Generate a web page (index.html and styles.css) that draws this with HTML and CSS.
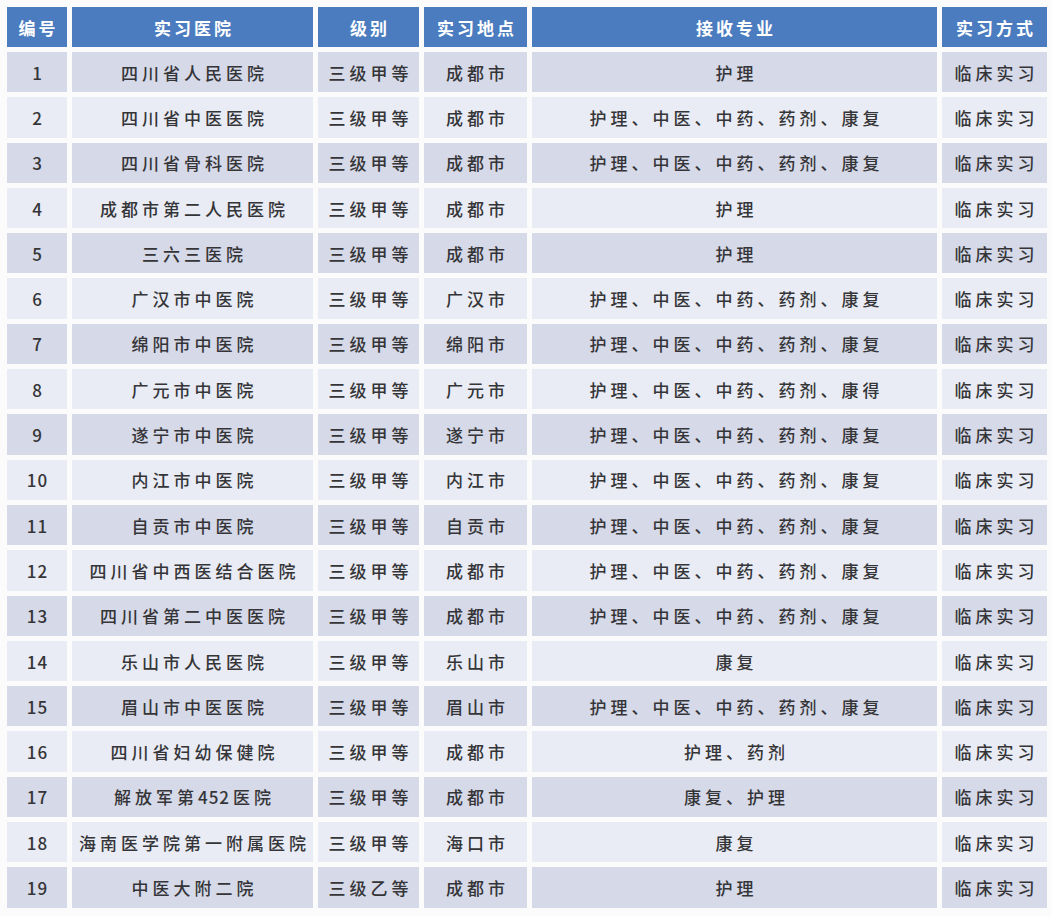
FILE: index.html
```html
<!DOCTYPE html>
<html lang="zh">
<head>
<meta charset="utf-8">
<title>实习医院</title>
<link rel="stylesheet" href="styles.css">
</head>
<body>
<div class="table">
  <div class="row head">
    <div class="cell">编号</div><div class="cell">实习医院</div><div class="cell">级别</div><div class="cell">实习地点</div><div class="cell">接收专业</div><div class="cell">实习方式</div>
  </div>
  <div class="row odd"><div class="cell num">1</div><div class="cell">四川省人民医院</div><div class="cell">三级甲等</div><div class="cell">成都市</div><div class="cell">护理</div><div class="cell">临床实习</div></div>
  <div class="row even"><div class="cell num">2</div><div class="cell">四川省中医医院</div><div class="cell">三级甲等</div><div class="cell">成都市</div><div class="cell">护理、中医、中药、药剂、康复</div><div class="cell">临床实习</div></div>
  <div class="row odd"><div class="cell num">3</div><div class="cell">四川省骨科医院</div><div class="cell">三级甲等</div><div class="cell">成都市</div><div class="cell">护理、中医、中药、药剂、康复</div><div class="cell">临床实习</div></div>
  <div class="row even"><div class="cell num">4</div><div class="cell">成都市第二人民医院</div><div class="cell">三级甲等</div><div class="cell">成都市</div><div class="cell">护理</div><div class="cell">临床实习</div></div>
  <div class="row odd"><div class="cell num">5</div><div class="cell">三六三医院</div><div class="cell">三级甲等</div><div class="cell">成都市</div><div class="cell">护理</div><div class="cell">临床实习</div></div>
  <div class="row even"><div class="cell num">6</div><div class="cell">广汉市中医院</div><div class="cell">三级甲等</div><div class="cell">广汉市</div><div class="cell">护理、中医、中药、药剂、康复</div><div class="cell">临床实习</div></div>
  <div class="row odd"><div class="cell num">7</div><div class="cell">绵阳市中医院</div><div class="cell">三级甲等</div><div class="cell">绵阳市</div><div class="cell">护理、中医、中药、药剂、康复</div><div class="cell">临床实习</div></div>
  <div class="row even"><div class="cell num">8</div><div class="cell">广元市中医院</div><div class="cell">三级甲等</div><div class="cell">广元市</div><div class="cell">护理、中医、中药、药剂、康得</div><div class="cell">临床实习</div></div>
  <div class="row odd"><div class="cell num">9</div><div class="cell">遂宁市中医院</div><div class="cell">三级甲等</div><div class="cell">遂宁市</div><div class="cell">护理、中医、中药、药剂、康复</div><div class="cell">临床实习</div></div>
  <div class="row even"><div class="cell num">10</div><div class="cell">内江市中医院</div><div class="cell">三级甲等</div><div class="cell">内江市</div><div class="cell">护理、中医、中药、药剂、康复</div><div class="cell">临床实习</div></div>
  <div class="row odd"><div class="cell num">11</div><div class="cell">自贡市中医院</div><div class="cell">三级甲等</div><div class="cell">自贡市</div><div class="cell">护理、中医、中药、药剂、康复</div><div class="cell">临床实习</div></div>
  <div class="row even"><div class="cell num">12</div><div class="cell">四川省中西医结合医院</div><div class="cell">三级甲等</div><div class="cell">成都市</div><div class="cell">护理、中医、中药、药剂、康复</div><div class="cell">临床实习</div></div>
  <div class="row odd"><div class="cell num">13</div><div class="cell">四川省第二中医医院</div><div class="cell">三级甲等</div><div class="cell">成都市</div><div class="cell">护理、中医、中药、药剂、康复</div><div class="cell">临床实习</div></div>
  <div class="row even"><div class="cell num">14</div><div class="cell">乐山市人民医院</div><div class="cell">三级甲等</div><div class="cell">乐山市</div><div class="cell">康复</div><div class="cell">临床实习</div></div>
  <div class="row odd"><div class="cell num">15</div><div class="cell">眉山市中医医院</div><div class="cell">三级甲等</div><div class="cell">眉山市</div><div class="cell">护理、中医、中药、药剂、康复</div><div class="cell">临床实习</div></div>
  <div class="row even"><div class="cell num">16</div><div class="cell">四川省妇幼保健院</div><div class="cell">三级甲等</div><div class="cell">成都市</div><div class="cell">护理、药剂</div><div class="cell">临床实习</div></div>
  <div class="row odd"><div class="cell num">17</div><div class="cell">解放军第<span class="dig">452</span>医院</div><div class="cell">三级甲等</div><div class="cell">成都市</div><div class="cell">康复、护理</div><div class="cell">临床实习</div></div>
  <div class="row even"><div class="cell num">18</div><div class="cell">海南医学院第一附属医院</div><div class="cell">三级甲等</div><div class="cell">海口市</div><div class="cell">康复</div><div class="cell">临床实习</div></div>
  <div class="row odd"><div class="cell num">19</div><div class="cell">中医大附二院</div><div class="cell">三级乙等</div><div class="cell">成都市</div><div class="cell">护理</div><div class="cell">临床实习</div></div>
</div>
</body>
</html>
```

FILE: styles.css
```css
html, body {
  margin: 0;
  padding: 0;
  background: #fbfbfc;
}
body {
  font-family: "Noto Sans CJK SC", "Noto Sans", sans-serif;
  color: #353538;
}
.table {
  display: flex;
  flex-direction: column;
  gap: 5px;
  padding: 7px 0 0 7px;
}
.row {
  display: grid;
  grid-template-columns: 60px 241px 101px 103px 405px 105px;
  column-gap: 5px;
  height: 40.3px;
}
.head {
  height: 40px;
}
.cell {
  display: flex;
  align-items: center;
  justify-content: center;
  font-size: 17px;
  font-weight: 500;
  letter-spacing: 4px;
  padding-left: 4px;
  white-space: nowrap;
}
.head .cell {
  background: #4a7cbf;
  color: #ffffff;
  font-weight: 700;
  letter-spacing: 3px;
  padding-left: 3px;
}
.odd .cell {
  background: #d5d9e8;
}
.even .cell {
  background: #e9ecf4;
}
.cell.num {
  letter-spacing: 1px;
  padding-left: 1px;
}
.dig {
  letter-spacing: 1px;
  margin-right: 3px;
}
```
